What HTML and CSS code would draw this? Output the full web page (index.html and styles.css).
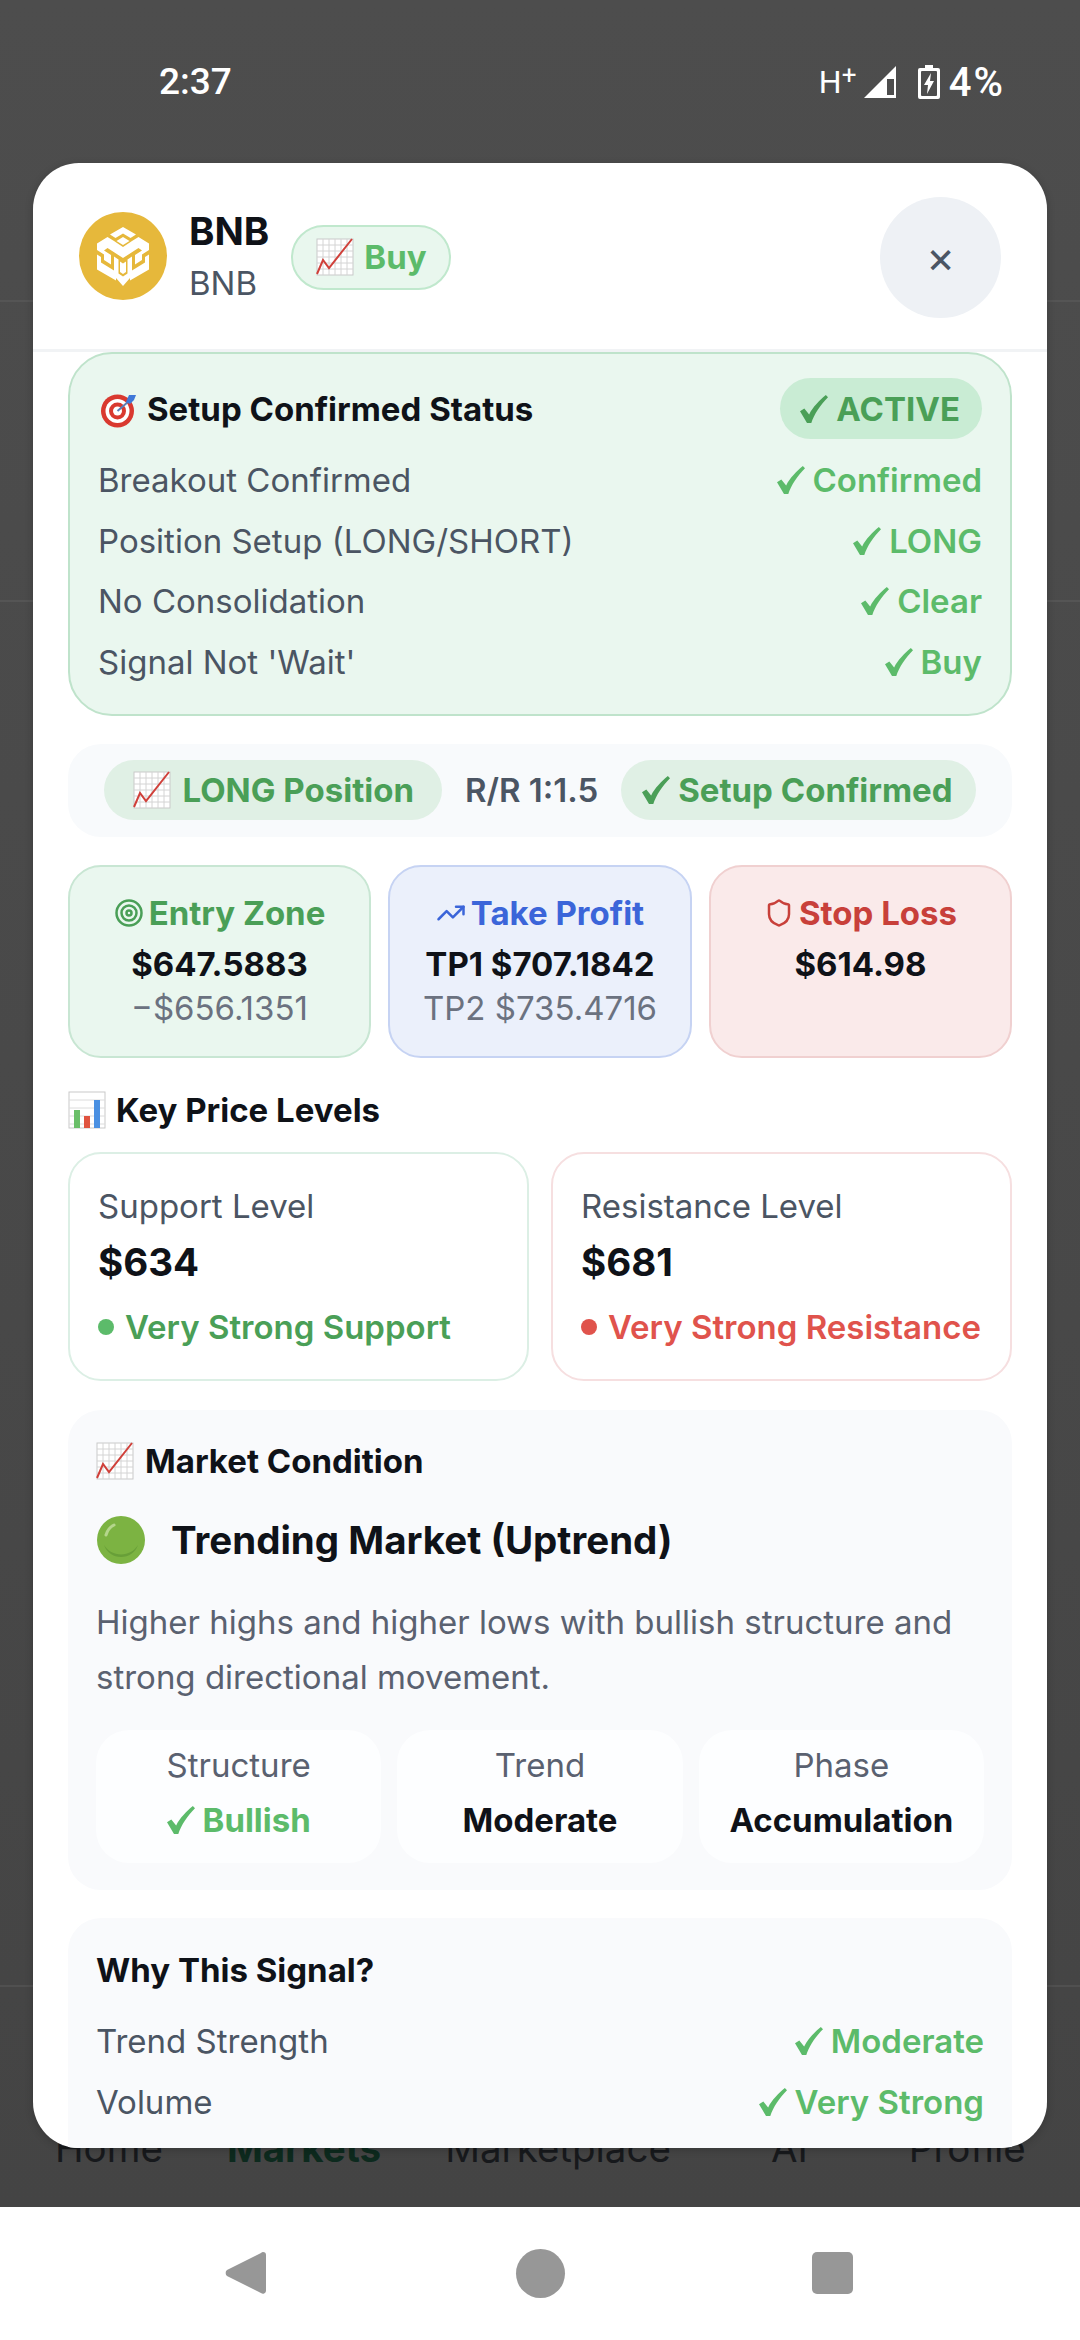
FILE: index.html
```html
<!DOCTYPE html>
<html lang="en">
<head>
<meta charset="utf-8">
<title>BNB signal</title>
<link rel="stylesheet" href="styles.css">
</head>
<body>
<svg class="defs" width="0" height="0" aria-hidden="true">
  <defs>
    <symbol id="chart-up" viewBox="0 0 38 38">
      <rect x="1" y="1" width="36" height="36" fill="#fff" stroke="#c9c9c9"/>
      <path d="M7 1v36M13 1v36M19 1v36M25 1v36M31 1v36M1 7h36M1 13h36M1 19h36M1 25h36M1 31h36" stroke="#d4d4d4" stroke-width="1" fill="none"/>
      <path d="M1 36 7 22l6 8L36 1" stroke="#d0403a" stroke-width="2" fill="none"/>
    </symbol>
    <symbol id="bars" viewBox="0 0 38 38">
      <rect x="1" y="1" width="36" height="36" fill="#fff" stroke="#c9c9c9"/>
      <path d="M1 9h36M1 17h36M1 25h36M1 33h36" stroke="#dcdcdc" fill="none"/>
      <rect x="6" y="19" width="6" height="18" fill="#6abf69"/>
      <rect x="16" y="25" width="6" height="12" fill="#e0533f"/>
      <rect x="26" y="9" width="6" height="28" fill="#4a90e2"/>
    </symbol>
    <symbol id="tick" viewBox="0 0 26 26">
      <path d="M0 15 4 12.500 8.500 18C12 11 18 5 24 0L26 2C19 9 13 18 10.500 26H6.500Z"/>
    </symbol>
  </defs>
</svg>

<div class="screen">
  <div class="backdrop">
    <header class="status">
      <span class="clock">2:37</span>
      <span class="status-right">
        <span class="net">H<sup>+</sup></span>
        <svg class="signal" viewBox="0 0 34 34"><path d="M33 1v32H1Z" fill="#fff"/><path d="M24 14h7v16h-7Z" fill="#4d4d4d"/></svg>
        <svg class="battery" viewBox="0 0 24 36"><path d="M8 1h8v3h5a2 2 0 0 1 2 2v27a2 2 0 0 1-2 2H3a2 2 0 0 1-2-2V6a2 2 0 0 1 2-2h5Z" fill="#fff"/><rect x="4" y="7" width="16" height="25" rx="1" fill="#4d4d4d"/><path d="M14 9 7 21h4l-1 9 7-13h-4Z" fill="#fff"/></svg>
        <span class="pct">4%</span>
      </span>
    </header>
    <div class="under-row under-one"></div>
    <div class="under-row under-two"></div>
    <div class="under-fill"></div>
    <nav class="tabs">
      <span>Home</span><span class="tab-on">Markets</span><span>Marketplace</span><span class="tab-ai">AI</span><span class="tab-last">Profile</span>
    </nav>
  </div>

  <footer class="sysnav">
    <svg class="back" viewBox="0 0 42 46"><path d="M38 2a3 3 0 0 1 3 3v36a3 3 0 0 1-5 2L2 26a4 4 0 0 1 0-6L36 3a3 3 0 0 1 2-1Z" fill="#979797"/></svg>
    <span class="home-dot"></span>
    <span class="recents"></span>
  </footer>

  <section class="sheet">
    <div class="sheet-head">
      <svg class="coin" viewBox="0 0 88 88">
        <circle cx="44" cy="44" r="44" fill="#e6b83b"/>
        <g fill="#fff">
          <path d="M44 15 57 22.500 51.500 26 44 21.500 36.500 26 31 22.500Z"/>
          <path d="M44 25 50.500 29 44 33 37.500 29Z"/>
          <path d="M28.500 25 35 29 44 35 53 29 59.500 25 70 31.500V38L63 42.500V48L56 52.500V43L63 38.500 59.500 36 44 46 28.500 36 25 38.500 32 43V52.500L25 48V42.500L18 38V31.500Z"/>
          <path d="M18 42.500 22 45V50.500L35 58.500V44.500L39.500 47.500V61.500L44 64.500 48.500 61.500V47.500L53 44.500V58.500L66 50.500V45L70 42.500V57.500L51 68.500V66L44 74 37 66V68.500L18 57.500Z"/>
          <path d="M41 49.500 44 51.500 47 49.500V60L44 62 41 60Z"/>
        </g>
      </svg>
      <div class="coin-names">
        <div class="coin-name">BNB</div>
        <div class="coin-sym">BNB</div>
      </div>
      <span class="buy"><svg class="emoji"><use href="#chart-up"/></svg>Buy</span>
      <button class="close" type="button">×</button>
    </div>

    <div class="sheet-body">
      <div class="setup">
        <div class="setup-head">
          <span class="setup-title">
            <svg class="emoji" viewBox="0 0 38 38">
              <circle cx="19.500" cy="21" r="16.500" fill="#d9392f"/>
              <circle cx="19.500" cy="21" r="12" fill="#fff"/>
              <circle cx="19.500" cy="21" r="8.500" fill="#d9392f"/>
              <circle cx="19.500" cy="21" r="4.500" fill="#fff"/>
              <path d="M19.500 21 31 11" stroke="#5a7fb8" stroke-width="2"/>
              <path d="M28 12 31 5 38 5 36 10 32 14Z" fill="#3f78d8"/>
            </svg>
            Setup Confirmed Status
          </span>
          <span class="active"><svg class="tick"><use href="#tick"/></svg>ACTIVE</span>
        </div>
        <div class="rows">
          <div class="row"><span>Breakout Confirmed</span><b><svg class="tick"><use href="#tick"/></svg>Confirmed</b></div>
          <div class="row"><span>Position Setup (LONG/SHORT)</span><b><svg class="tick"><use href="#tick"/></svg>LONG</b></div>
          <div class="row"><span>No Consolidation</span><b><svg class="tick"><use href="#tick"/></svg>Clear</b></div>
          <div class="row"><span>Signal Not 'Wait'</span><b><svg class="tick"><use href="#tick"/></svg>Buy</b></div>
        </div>
      </div>

      <div class="position">
        <span class="pill pill-long"><svg class="emoji"><use href="#chart-up"/></svg>LONG Position</span>
        <span class="ratio">R/R 1:1.5</span>
        <span class="pill"><svg class="tick"><use href="#tick"/></svg>Setup Confirmed</span>
      </div>

      <div class="zones">
        <div class="zone zone-entry">
          <div class="zone-title">
            <svg class="zone-icon" viewBox="0 0 24 24"><circle cx="12" cy="12" r="10"/><circle cx="12" cy="12" r="6"/><circle cx="12" cy="12" r="2"/></svg>
            Entry Zone
          </div>
          <div class="zone-main">$647.5883</div>
          <div class="zone-sub">−$656.1351</div>
        </div>
        <div class="zone zone-profit">
          <div class="zone-title">
            <svg class="zone-icon" viewBox="0 0 24 24"><path d="M22 7l-8.500 8.500-5-5L2 17"/><path d="M16 7h6v6"/></svg>
            Take Profit
          </div>
          <div class="zone-main">TP1 $707.1842</div>
          <div class="zone-sub">TP2 $735.4716</div>
        </div>
        <div class="zone zone-stop">
          <div class="zone-title">
            <svg class="zone-icon" viewBox="0 0 24 24"><path d="M20 13c0 5-3.500 7.500-7.660 8.950a1 1 0 0 1-.67-.01C7.500 20.500 4 18 4 13V6a1 1 0 0 1 1-1c2 0 4.500-1.200 6.240-2.720a1.170 1.170 0 0 1 1.520 0C14.510 3.810 17 5 19 5a1 1 0 0 1 1 1Z"/></svg>
            Stop Loss
          </div>
          <div class="zone-main">$614.98</div>
        </div>
      </div>

      <h3 class="levels-title"><svg class="emoji"><use href="#bars"/></svg>Key Price Levels</h3>
      <div class="levels">
        <div class="level level-support">
          <div class="level-label">Support Level</div>
          <div class="level-price">$634</div>
          <div class="level-note"><i class="dot"></i>Very Strong Support</div>
        </div>
        <div class="level level-resist">
          <div class="level-label">Resistance Level</div>
          <div class="level-price">$681</div>
          <div class="level-note"><i class="dot"></i>Very Strong Resistance</div>
        </div>
      </div>

      <div class="market">
        <h3 class="market-title"><svg class="emoji"><use href="#chart-up"/></svg>Market Condition</h3>
        <div class="market-state">
          <svg class="orb" viewBox="0 0 50 50">
            <circle cx="25" cy="25" r="24" fill="#7cb342"/>
            <path d="M8 30a18 18 0 0 0 34 0 20 20 0 0 1-34 0Z" fill="#689f38"/>
            <path d="M10 20q2-7 8-10" stroke="#b5d68c" stroke-width="3" fill="none" stroke-linecap="round"/>
          </svg>
          Trending Market (Uptrend)
        </div>
        <p class="market-text">Higher highs and higher lows with bullish structure and strong directional movement.</p>
        <div class="stats">
          <div class="stat"><span>Structure</span><b class="good"><svg class="tick"><use href="#tick"/></svg>Bullish</b></div>
          <div class="stat"><span>Trend</span><b>Moderate</b></div>
          <div class="stat"><span>Phase</span><b>Accumulation</b></div>
        </div>
      </div>

      <div class="why">
        <h3 class="why-title">Why This Signal?</h3>
        <div class="rows">
          <div class="row"><span>Trend Strength</span><b><svg class="tick"><use href="#tick"/></svg>Moderate</b></div>
          <div class="row"><span>Volume</span><b><svg class="tick"><use href="#tick"/></svg>Very Strong</b></div>
        </div>
      </div>
    </div>
  </section>
</div>
</body>
</html>
```
FILE: styles.css
```css
* { box-sizing: border-box; }
html, body { margin: 0; padding: 0; }
body { font-family: Inter, "Noto Sans", sans-serif; color: #0f1218; background: #fff; }
.defs { display: block; height: 0; }
i { font-style: normal; }
h3, p { margin: 0; }

.screen { position: relative; width: 1080px; height: 2340px; display: flex; flex-direction: column; overflow: hidden; }

/* dimmed page behind the sheet */
.backdrop { height: 2207px; display: flex; flex-direction: column; background: linear-gradient(#4d4d4d, #484848 60%, #444); }
.status { height: 164px; flex: none; padding: 60px 75px 0 159px; display: flex; justify-content: space-between; align-items: flex-start; color: #fff; font-family: Roboto, sans-serif; }
.clock { font-size: 37px; font-weight: 500; line-height: 44px; }
.status-right { display: flex; align-items: center; height: 44px; }
.net { font-size: 32px; width: 44px; line-height: 34px; }
.net sup { font-size: 26px; line-height: 0; vertical-align: 9px; }
.signal { width: 34px; height: 34px; }
.battery { width: 24px; height: 36px; margin-left: 20px; }
.pct { font-size: 40px; font-weight: 500; letter-spacing: 2px; margin-left: 8px; }

.under-row { height: 300px; flex: none; border-bottom: 2px solid #555; }
.under-one { height: 138px; }
.under-fill { flex: 1; border-bottom: 2px solid #505050; margin-bottom: 130px; }
.tabs { height: 90px; flex: none; display: flex; gap: 64px; padding: 8px 0 0 55px; align-items: flex-start; font-size: 38.500px; line-height: 46px; color: #17191c; }
.tab-on { color: #0d2a1e; font-weight: 700; }
.tab-ai { margin-left: 36px; }
.tab-last { margin-left: 37px; }

.sysnav { flex: 1; display: flex; align-items: center; padding-bottom: 1px; background: #fff; }
.back { width: 42px; height: 46px; margin-left: 225px; }
.home-dot { width: 49px; height: 49px; border-radius: 50%; background: #979797; margin-left: 249px; }
.recents { width: 41px; height: 42px; border-radius: 5px; background: #979797; margin-left: 247px; }

/* sheet */
.sheet { position: absolute; left: 33px; top: 163px; width: 1014px; height: 1985px; background: #fff; border-radius: 46px; overflow: hidden; display: flex; flex-direction: column; box-shadow: 0 2px 8px rgba(0,0,0,.2); }
.sheet-head { height: 189px; flex: none; display: flex; align-items: center; padding: 0 46px; border-bottom: 3px solid #f1f3f5; }
.coin { width: 88px; height: 88px; flex: none; }
.coin-names { margin-left: 22px; margin-top: 2px; }
.coin-name { font-size: 38.500px; font-weight: 700; line-height: 44px; }
.coin-sym { font-size: 33px; color: #4b5563; line-height: 44px; margin-top: 8px; }
.buy { height: 65px; margin-left: 22px; margin-top: 2px; padding: 0 22px 0 23px; display: flex; align-items: center; gap: 10px; background: #e9f7ee; border: 2px solid #c0e8cd; border-radius: 33px; color: #5cbb6a; font-size: 33px; font-weight: 700; }
.emoji { width: 38px; height: 38px; flex: none; }
.close { width: 121px; height: 121px; margin-left: auto; margin-top: 2px; border: 0; border-radius: 50%; background: #eef1f5; color: #4b5563; font: 400 44px/1 Inter, sans-serif; padding: 0; }

.sheet-body { flex: 1; min-height: 0; overflow: hidden; padding: 0 35px; display: flex; flex-direction: column; }
.tick { width: 28px; height: 28px; flex: none; fill: currentColor; }

/* confirmed setup block */
.setup { height: 364px; flex: none; padding: 24px 28px 0; background: #eaf7ef; border: 2px solid #bfe3cb; border-radius: 44px; }
.setup-head { display: flex; justify-content: space-between; align-items: center; margin-bottom: 19px; }
.setup-title { display: flex; align-items: center; gap: 11px; font-size: 33px; font-weight: 700; }
.active { height: 61px; padding: 0 22px 0 20px; display: flex; align-items: center; gap: 8px; background: #c9ecd4; border-radius: 31px; color: #4a9f57; font-size: 33px; font-weight: 700; }
.rows { display: flex; flex-direction: column; gap: 16.500px; }
.row { display: flex; justify-content: space-between; font-size: 33px; line-height: 44px; color: #4b5563; }
.row b { display: flex; align-items: center; gap: 8px; font-weight: 600; color: #5cbb6a; }

/* position strip */
.position { height: 93px; flex: none; margin-top: 28px; padding-bottom: 1px; display: flex; align-items: center; justify-content: center; gap: 23px; background: #f8fafc; border-radius: 33px; }
.pill { height: 60px; padding: 0 23px 0 21px; display: flex; align-items: center; gap: 8px; background: #e0f0e5; border-radius: 30px; color: #4a9f57; font-size: 33px; font-weight: 700; line-height: 56px; }
.pill-long { padding: 0 28px 0 29px; gap: 11px; }
.ratio { font-size: 33px; font-weight: 600; color: #4b5563; }

/* trade zones */
.zones { flex: none; height: 193px; margin-top: 28px; display: grid; grid-template-columns: 303px 304px 303px; gap: 17px; }
.zone { padding-top: 24px; border: 2px solid; border-radius: 33px; text-align: center; line-height: 44px; font-size: 33px; }
.zone-entry { background: #eaf7ef; border-color: #c8e6d3; color: #4a9f57; }
.zone-profit { background: #ebf0fb; border-color: #c6d3f3; color: #3b65d9; }
.zone-stop { background: #faeaea; border-color: #f0d0d0; color: #c8403a; }
.zone-title { display: flex; justify-content: center; align-items: center; gap: 5px; font-weight: 700; }
.zone-icon { width: 30px; height: 30px; fill: none; stroke: currentColor; stroke-width: 2; stroke-linecap: round; stroke-linejoin: round; }
.zone-main { margin-top: 7px; font-weight: 700; color: #0f1218; }
.zone-sub { color: #6b7280; }

/* price levels */
.levels-title { flex: none; height: 44px; margin-top: 30px; display: flex; align-items: center; gap: 10px; font-size: 33px; font-weight: 700; }
.levels { flex: none; height: 229px; margin-top: 20px; display: grid; grid-template-columns: 461px 461px; gap: 22px; }
.level { padding: 30px 28px 0; border: 2px solid; border-radius: 33px; }
.level-support { border-color: #dcefe5; color: #4a9f57; }
.level-resist { border-color: #f6dfe0; color: #e0534c; }
.level-label { font-size: 33px; line-height: 44px; color: #4b5563; }
.level-price { margin-top: 12px; font-size: 38.500px; line-height: 44px; font-weight: 700; color: #0f1218; }
.level-note { margin-top: 21px; display: flex; align-items: center; gap: 11px; font-size: 33px; line-height: 44px; font-weight: 600; }
.dot { width: 16px; height: 16px; border-radius: 50%; flex: none; }
.level-support .dot { background: #5cbb6a; }
.level-resist .dot { background: #e0534c; }

/* market condition */
.market { flex: none; height: 480px; margin-top: 29px; padding: 29px 28px 0; background: #f9fafc; border-radius: 33px; }
.market-title { display: flex; align-items: center; gap: 11px; height: 44px; font-size: 33px; font-weight: 700; }
.market-state { margin-top: 32px; display: flex; align-items: center; gap: 25px; height: 50px; font-size: 38.500px; font-weight: 700; }
.orb { width: 50px; height: 50px; flex: none; }
.market-text { margin-top: 30px; font-size: 33px; line-height: 55px; color: #5a6170; }
.stats { margin-top: 25px; display: grid; grid-template-columns: repeat(3, 1fr); gap: 16px; }
.stat { height: 133px; padding-top: 13px; display: flex; flex-direction: column; align-items: center; gap: 11px; background: #fdfeff; border-radius: 33px; font-size: 33px; line-height: 44px; color: #5a6170; }
.stat b { display: flex; align-items: center; gap: 8px; font-weight: 700; color: #0f1218; }
.stat b.good { color: #5cbb6a; }

/* reasons */
.why { flex: none; height: 320px; margin-top: 28px; padding: 30px 28px 0; background: #f9fafc; border-radius: 33px; }
.why-title { height: 44px; margin-bottom: 27px; font-size: 33px; line-height: 44px; font-weight: 700; }
```
